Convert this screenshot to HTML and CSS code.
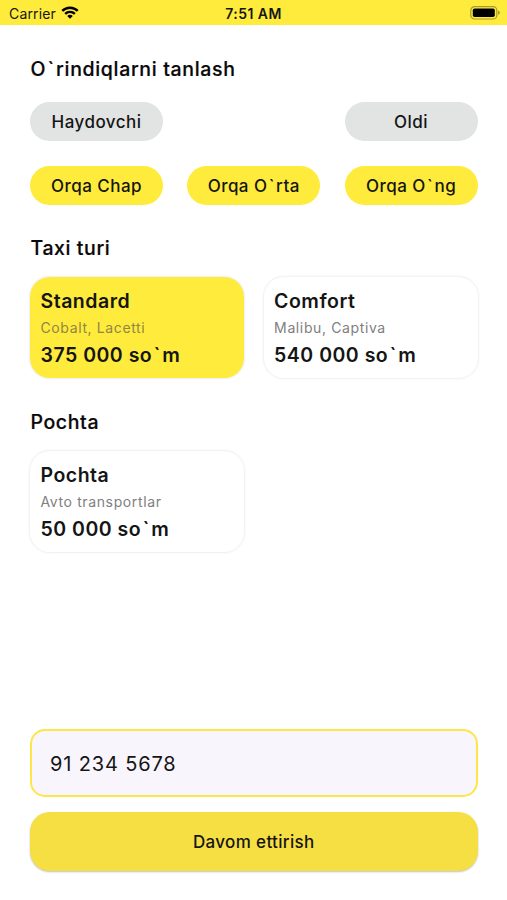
FILE: index.html
```html
<!DOCTYPE html>
<html lang="uz">
<head>
<meta charset="utf-8">
<title>Taxi</title>
<link rel="stylesheet" href="styles.css">
</head>
<body>
<header class="status">
  <div class="carrier"><span>Carrier</span>
    <svg width="18" height="14" viewBox="0 0 18 14"><path d="M0.4 4.1a12.2 12.2 0 0 1 17.2 0l-1.7 1.7a9.8 9.8 0 0 0-13.8 0zM3.3 7a8.1 8.1 0 0 1 11.4 0l-1.7 1.7a5.7 5.7 0 0 0-8 0zM6.2 10a4 4 0 0 1 5.6 0l-2.8 2.8z"/></svg>
  </div>
  <div class="time">7:51 AM</div>
  <div class="power"><svg width="30" height="14" viewBox="0 0 30 14"><rect x=".8" y=".6" width="26" height="12.4" rx="3.8" fill="none" stroke="#a89a30" stroke-width="1.2"/><rect x="2.8" y="2.5" width="22" height="8.6" rx="1.8"/><path d="M28 4.5q1.8.6 1.8 2.2t-1.8 2.2z" fill="#a89a30"/></svg></div>
</header>
<main class="page">
  <h2 class="title first">O<i>`</i>rindiqlarni tanlash</h2>
  <div class="seats">
    <button class="seat taken">Haydovchi</button>
    <button class="seat taken front">Oldi</button>
    <button class="seat">Orqa Chap</button>
    <button class="seat">Orqa O<i>`</i>rta</button>
    <button class="seat">Orqa O<i>`</i>ng</button>
  </div>
  <h2 class="title taxi">Taxi turi</h2>
  <div class="cards">
    <article class="card active"><h3>Standard</h3><p>Cobalt, Lacetti</p><strong>375 000 so<i>`</i>m</strong></article>
    <article class="card"><h3>Comfort</h3><p>Malibu, Captiva</p><strong>540 000 so<i>`</i>m</strong></article>
  </div>
  <h2 class="title mail">Pochta</h2>
  <div class="cards">
    <article class="card"><h3>Pochta</h3><p>Avto transportlar</p><strong>50 000 so<i>`</i>m</strong></article>
  </div>
  <div class="bottom">
    <div class="phone">91 234 5678</div>
    <button class="next">Davom ettirish</button>
  </div>
</main>
</body>
</html>
```
FILE: styles.css
```css
* { box-sizing: border-box; margin: 0; }
body { height: 900px; display: flex; flex-direction: column; background: #fff; color: #151515; font-family: Inter, sans-serif; overflow: hidden; }
button { border: 0; font: inherit; color: inherit; padding: 0; }
i { font-style: normal; padding: 0 .07em; }
.status { height: 25px; flex: none; background: #ffeb3b; display: grid; grid-template-columns: 1fr auto 1fr; align-items: center; padding: 2px 7px 0 9px; font-size: 14px; }
.carrier { display: flex; align-items: center; gap: 5.5px; letter-spacing: .15px; }
.carrier svg { margin-top: -2px; }
.time { font-weight: 600; font-size: 14px; letter-spacing: .45px; margin-right: 2px; }
.power { display: flex; justify-content: flex-end; }
.power svg { margin-top: -1px; }
.page { flex: 1; display: flex; flex-direction: column; padding: 32px 29.4px 29px 30px; }
.title { font-size: 19.5px; line-height: 24px; font-weight: 500; letter-spacing: .6px; padding-left: .5px; color: #080808; -webkit-text-stroke: .2px #080808; }
.first { letter-spacing: .67px; }
.seats { margin-top: 21.4px; display: grid; grid-template-columns: repeat(3, 133px); justify-content: space-between; row-gap: 25px; }
.seat { height: 38.8px; border-radius: 20px; background: #ffeb3b; font-size: 17px; font-weight: 500; letter-spacing: .47px; }
.seat.taken { background: #e1e4e3; }
.front { grid-column: 3; }
.taxi { margin-top: 31px; }
.cards { margin-top: 17px; display: grid; grid-template-columns: 214px 214px; justify-content: space-between; }
.card { height: 101px; border-radius: 20px; padding: 11px 10px 0 10.5px; box-shadow: 0 0 2px 1px rgba(0,0,0,.07); display: flex; flex-direction: column; }
.card h3, .card strong { font-size: 19.5px; line-height: 26px; font-weight: 600; letter-spacing: .5px; }
.card p { font-size: 14px; line-height: 28px; letter-spacing: .62px; color: #808080; }
.card.active { background: #ffeb3b; }
.card.active p { color: #908646; }
.mail { margin-top: 32px; }
.bottom { margin-top: auto; display: grid; gap: 15px; }
.phone { height: 68px; border: 2px solid #fde648; border-radius: 15px; background: #f8f5fd; padding: 1px 0 0 18px; display: flex; align-items: center; font-size: 20px; letter-spacing: .85px; }
.next { height: 59px; border-radius: 20px; background: #f5df43; font-size: 17px; font-weight: 500; letter-spacing: .35px; box-shadow: 0 1px 2px rgba(0,0,0,.25); }
```
